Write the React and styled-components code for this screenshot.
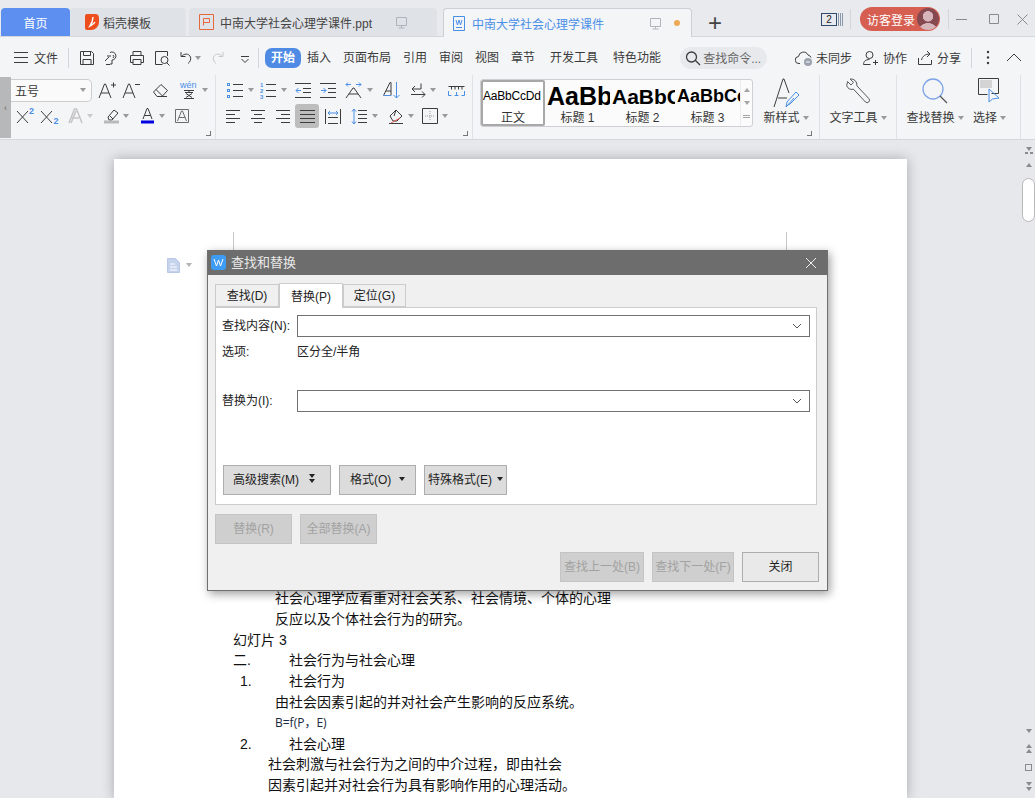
import React from 'react';
import styled, { createGlobalStyle } from 'styled-components';

const GlobalStyle = createGlobalStyle`
  html, body {
    margin: 0;
    padding: 0;
    overflow: hidden;
    background: #e7e8ec;
  }
  * {
    box-sizing: border-box;
  }
`;

const BLUE = '#4a8fe6';
const CJK = `"Liberation Sans", "Noto Sans CJK SC", sans-serif`;

const Root = styled.div`
  position: relative;
  width: 1035px;
  height: 798px;
  overflow: hidden;
  display: flex;
  flex-direction: column;
  font-family: ${CJK};
  font-size: 12px;
  color: #3a3a3a;
  background: #e7e8ec;
`;

/* ---- icons ---- */
const Svg = styled.svg`
  display: block;
  flex: none;
  fill: none;
  stroke: ${(p) => p.$stroke || '#3c3c3c'};
  stroke-width: 1;
`;

const paths = {
  menu: <path d="M0 2.5h14M0 7.5h14M0 12.5h14" />,
  save: <path d="M2.5 2.5h11l2 2v11h-13zM5.5 2.5v4h7v-4M5 15.5v-5h8v5" />,
  saveAs: <path d="M7 3.5a4 4 0 1 1 2 7.5v4h-2M4 7h4M2 12l4-4M10 6a2 2 0 0 1 0 3M3 15.5h4" />,
  print: <path d="M5 6V2.5h8V6M2.5 6.5h13v7h-2.5M2.5 6.5v7h2.5M5 10.5h8v5H5z" />,
  preview: <path d="M14.5 7V2.5h-12v13h7M8 11a3.5 3.5 0 1 0 7 0a3.5 3.5 0 1 0-7 0M13.5 13.5l3 3" />,
  undo: <path d="M4 3v4.5h4.5M4.5 7.5c2-3 7.5-3.5 9 .5c.8 2.5-.5 5-2.5 6.5" />,
  redo: <path d="M14 3v4.5H9.5M13.5 7.5c-2-3-7.5-3.5-9 .5c-.8 2.5.5 5 2.5 6.5" stroke="#c8c8c8" />,
  moreDown: <path d="M3 5.5h8M3.5 8l3.5 3.5L10.5 8" />,
  zoom: <path d="M1.5 7a5 5 0 1 0 10 0a5 5 0 1 0-10 0M10.5 10.5l4.5 4.5" strokeWidth="1.3" />,
  syncOff: (
    <>
      <path d="M5 14.5H4a3.5 3.5 0 0 1-.5-7a5 5 0 0 1 9.5-1.5a4 4 0 0 1 3 2.5" />
      <circle cx="13" cy="13" r="4" fill="#9aa3ad" stroke="none" />
      <path d="M11 13h4" stroke="#fff" />
    </>
  ),
  team: <path d="M4 6a3.5 3.5 0 1 0 7 0a3.5 3.5 0 1 0-7 0M1.5 15.5c0-3 2-5 6-5M8.5 15.5H1.5M11 13.5h5M13.5 11v5" />,
  share: <path d="M2.5 9v6.5h13V11M5.5 11c1-4 4-6 8-6M11 2l3 3-3 3" />,
  dots: (
    <g fill="#3c3c3c" stroke="none">
      <circle cx="2" cy="2" r="1.2" />
      <circle cx="2" cy="7.5" r="1.2" />
      <circle cx="2" cy="13" r="1.2" />
    </g>
  ),
  chevronUp: <path d="M1 9l7-7 7 7" />,
  monitor: <path d="M1.5 1.5h10v8h-10zM6.5 9.5v2M3.5 12h6" stroke="#aeb4bb" />,
  grow: <path d="M1 17L6.5 3h1L13 17M3 12h8M13 4h5M15.5 1.5v5" />,
  shrink: <path d="M1 17L6.5 3h1L13 17M3 12h8M13 3.5h5" />,
  eraser: <path d="M1.5 11L9 3.5 15.5 9.5 10 15.5H5zM4 8.5l6.5 6.5M5 15.5h10" />,
  phonetic: (
    <>
      <path d="M4 10.5h10M9 10.5v2M5 12.5h8M6 13.5l6 4M12 13.5l-6 4M4 18.5h10" />
      <text x="0" y="8" fontSize="9" fill={BLUE} stroke="none" fontFamily="Liberation Sans">wén</text>
    </>
  ),
  sup: <path d="M1 4l11 12M12 4L1 16" />,
  ghostA: <path d="M1 16L6.5 2h2L14 16M4 11h7M3 16l5-12" stroke="#c4c4c4" strokeWidth="1.5" />,
  marker: (
    <>
      <path d="M4 10l6-7 4 3-6 7H5zM6 9l3 3" />
      <path d="M0 15h15" stroke="#b9b9b9" strokeWidth="3" />
    </>
  ),
  colorA: (
    <>
      <path d="M3 12L7 1.5h1L12 12M4.5 8.5h6" />
      <path d="M1 15h13" stroke="#0000e0" strokeWidth="3" />
    </>
  ),
  boxA: <path d="M1.5 1.5h13v13h-13zM3.5 13L7.5 3h1l4 10M5 9.5h6" stroke="#6b6b6b" />,
  bullets: (
    <>
      <path d="M6 2.5h10M6 8.5h10M6 14.5h10" />
      <g stroke={BLUE}>
        <rect x="0.5" y="1.5" width="2" height="2" />
        <rect x="0.5" y="7.5" width="2" height="2" />
        <rect x="0.5" y="13.5" width="2" height="2" />
      </g>
    </>
  ),
  numbers: (
    <>
      <path d="M6 2.5h10M6 8.5h10M6 14.5h10" />
      <g fill={BLUE} stroke="none" fontSize="6" fontWeight="700" fontFamily="Liberation Sans">
        <text x="0" y="5">1</text>
        <text x="0" y="11">2</text>
        <text x="0" y="17">3</text>
      </g>
    </>
  ),
  outdent: (
    <>
      <path d="M0 1.5h16M8 6.5h8M8 10.5h8M0 15.5h16" />
      <path d="M6 8.5H1M3.5 6L1 8.5 3.5 11" stroke={BLUE} />
    </>
  ),
  indent: (
    <>
      <path d="M0 1.5h16M8 6.5h8M8 10.5h8M0 15.5h16" />
      <path d="M1 8.5h5M3.5 6L6 8.5 3.5 11" stroke={BLUE} />
    </>
  ),
  textDir: (
    <>
      <path d="M2 17L9 7h1l7 10M5 13h9" />
      <path d="M2 3.5h5M4 1.5l-2 2 2 2M12 3.5h5M15 1.5l2 2-2 2" stroke={BLUE} />
    </>
  ),
  sort: (
    <>
      <path d="M1.5 14.5L8 1.5h1v13M4 10h5" />
      <path d="M1.5 14.5h7.5" stroke={BLUE} />
      <path d="M14.5 1v16M11.5 14l3 3 3-3" stroke={BLUE} />
    </>
  ),
  tabMark: <path d="M11 1.5V7H2M5 4L2 7l3 3M1 12.5h14M12 9.5l3 3-3 3" />,
  ruler: (
    <>
      <path d="M0.5 3.5h16M3.5 3.5v3M7 3.5v3M10.5 3.5v3M14 3.5v3" />
      <path d="M0.5 8v4.5h3M16.5 8v4.5h-3M8.5 9v4M6.5 12.5h4" stroke={BLUE} />
    </>
  ),
  left: <path d="M0 2.5h14M0 6.5h9M0 10.5h14M0 14.5h9" />,
  center: <path d="M0 2.5h14M3 6.5h8M0 10.5h14M3 14.5h8" />,
  right: <path d="M0 2.5h14M5 6.5h9M0 10.5h14M5 14.5h9" />,
  justify: <path d="M0 2.5h15M0 6.5h15M0 10.5h15M0 14.5h15" />,
  distribute: (
    <>
      <path d="M.5 1v15M15.5 1v15M3 9.5h10M3 15.5h10" />
      <path d="M3 5h10M5 3L3 5l2 2M11 3l2 2-2 2" stroke={BLUE} />
    </>
  ),
  spacing: (
    <>
      <path d="M7 2.5h9M7 6.5h9M7 10.5h9M7 14.5h9" />
      <path d="M3 1v15M1 3.5L3 1l2 2.5M1 13.5L3 16l2-2.5" stroke={BLUE} />
    </>
  ),
  shading: (
    <>
      <path d="M2 8l6-6 6 6-5 5H5zM8 2l-2 6" />
      <path d="M1 15.5h14" />
      <path d="M3 15l9-5" stroke="#e0584c" />
    </>
  ),
  borders: (
    <>
      <path d="M.5 .5h15v15H.5z" />
      <path d="M8 3v10M3 8h10" stroke="#9a9a9a" strokeDasharray="1 1" />
    </>
  ),
  newStyle: (
    <>
      <path d="M1 29L10 1h1l5 14M5 20h9" />
      <path d="M15 27l-2 2 1-5 9-10 3 3-9 9z" stroke={BLUE} />
      <path d="M13 29l8-9" stroke={BLUE} />
    </>
  ),
  wrench: <path d="M3 3l4 4 3-3-4-4a7 7 0 0 1 8 8l14 15a2.5 2.5 0 0 1-4 4L10 12a7 7 0 0 1-8-4z" transform="translate(0 1) scale(.85)" />,
  findBig: (
    <>
      <path d="M1 11a10 10 0 1 0 20 0a10 10 0 1 0-20 0" stroke="#7da4e8" strokeWidth="1.3" />
      <path d="M18 18l7 7" stroke="#555" strokeWidth="1.3" />
    </>
  ),
  selectBig: (
    <>
      <path d="M.5 .5h20v15h-7M.5 .5v16h9" />
      <rect x="2" y="2" width="12" height="8" fill="#d4d4d4" stroke="none" />
      <path d="M11 11v13l3.5-3 6.5-1z" stroke={BLUE} />
    </>
  ),
  docPage: (
    <>
      <path d="M.5 .5h8l4 4v10h-12z" fill="#c5d3ec" stroke="#b9c8e6" />
      <path d="M3 6h5M3 9h7M3 12h7" stroke="#fff" />
    </>
  ),
  down: <path d="M1 1l4 4 4-4" />,
  close: <path d="M1 1l10 10M11 1L1 11" />,
};

const Icon = ({ name, w = 18, h = 18, stroke }) => (
  <Svg width={w} height={h} viewBox={`0 0 ${w} ${h}`} $stroke={stroke}>
    {paths[name]}
  </Svg>
);

const Caret = styled.span`
  flex: none;
  width: 0;
  height: 0;
  margin-left: ${(p) => p.$gap ?? 4}px;
  border: 3px solid transparent;
  border-top: 4px solid ${(p) => p.$color || '#9a9a9a'};
  border-bottom: 0;
`;

const CaretUp = styled.span`
  flex: none;
  width: 0;
  height: 0;
  border: 3px solid transparent;
  border-bottom: 4px solid ${(p) => p.$color || '#a5a5a5'};
  border-top: 0;
`;

/* ---- tab bar ---- */
const TabBar = styled.div`
  height: 37px;
  flex: none;
  display: flex;
  align-items: flex-end;
  padding-left: 1px;
  background: #e8eaee;
  border-bottom: 1px solid #d3d6db;
`;

const HomeTab = styled.div`
  width: 69px;
  height: 28px;
  display: flex;
  align-items: center;
  justify-content: center;
  background: #5c8ff0;
  color: #fff;
  border-radius: 4px 4px 0 0;
`;

const Tab = styled.div`
  display: flex;
  align-items: center;
  height: ${(p) => (p.$active ? 29 : 28)}px;
  width: ${(p) => p.$w}px;
  margin-left: ${(p) => p.$ml || 0}px;
  margin-bottom: ${(p) => (p.$active ? -1 : 0)}px;
  padding-left: ${(p) => p.$pl}px;
  gap: ${(p) => p.$gap || 6}px;
  border-radius: 4px 4px 0 0;
  background: ${(p) => (p.$active ? '#f4f5f7' : '#dfe2e7')};
  border: ${(p) => (p.$active ? '1px solid #ccd0d6' : '0')};
  border-bottom: 0;
  color: ${(p) => (p.$active ? BLUE : '#444')};
`;

const TabLabel = styled.span`
  flex: ${(p) => (p.$grow ? 1 : 'none')};
  white-space: nowrap;
`;

const TabMonitor = styled.span`
  margin-left: 17px;
`;

const Dot = styled.span`
  width: 6px;
  height: 6px;
  margin: 0 11px 0 5px;
  border-radius: 50%;
  background: #eea957;
`;

const NewTab = styled.div`
  width: 24px;
  margin: 0 0 1px 11px;
  font-size: 24px;
  line-height: 24px;
  text-align: center;
  color: #444;
`;

const WindowArea = styled.div`
  margin-left: auto;
  align-self: stretch;
  display: flex;
  align-items: center;
  padding: 2px 5px 0 0;
`;

const CountBadge = styled.div`
  width: 16px;
  height: 13px;
  border: 1px solid #2f4a6d;
  font-size: 10px;
  line-height: 11px;
  text-align: center;
  color: #222;
`;

const CountStripes = styled.div`
  width: 5px;
  height: 13px;
  margin-left: 1px;
  background: repeating-linear-gradient(90deg, #8a97a8 0 1px, transparent 1px 2px);
`;

const BarSep = styled.span`
  width: 1px;
  height: ${(p) => p.$h || 20}px;
  margin: ${(p) => p.$m || '0'};
  flex: none;
  background: #d3d5da;
`;

const LoginPill = styled.div`
  width: 80px;
  height: 24px;
  display: flex;
  align-items: center;
  justify-content: space-between;
  padding: 0 1px 0 7px;
  border-radius: 12px;
  background: #d65f52;
  color: #fff;
`;

const Avatar = styled.span`
  width: 22px;
  height: 22px;
  border-radius: 50%;
  background: radial-gradient(circle at 50% 38%, #d6b5bb 0 5px, transparent 5.5px),
    radial-gradient(circle at 50% 115%, #d6b5bb 0 10px, transparent 10.5px), #86494f;
`;

const WinBtn = styled.div`
  width: ${(p) => p.$w}px;
  display: flex;
  justify-content: center;
`;

/* ---- menu row ---- */
const MenuBar = styled.div`
  height: 38px;
  padding-top: 3px;
  flex: none;
  display: flex;
  align-items: center;
  background: #f4f5f7;
`;

const FileBtn = styled.div`
  width: 68px;
  padding-left: 14px;
  display: flex;
  align-items: center;
  gap: 6px;
`;

const Cell = styled.div`
  width: ${(p) => p.$w}px;
  height: ${(p) => p.$h || 26}px;
  flex: none;
  margin-left: ${(p) => p.$ml || 0}px;
  display: flex;
  align-items: center;
  justify-content: center;
  border-radius: 3px;
  background: ${(p) => (p.$on ? '#bdbdbd' : 'transparent')};
`;

const MenuItem = styled.div`
  padding: 0 6px;
  margin-left: ${(p) => p.$ml || 0}px;
  line-height: 20px;
  white-space: nowrap;
`;

const ActiveMenu = styled.div`
  width: 36px;
  height: 20px;
  margin-left: 6px;
  border-radius: 7px;
  background: #4f8be4;
  color: #fff;
  font-weight: 700;
  text-align: center;
  line-height: 20px;
`;

const SearchPill = styled.div`
  width: 87px;
  height: 22px;
  margin-left: 13px;
  padding-left: 5px;
  display: flex;
  align-items: center;
  gap: 2px;
  border-radius: 11px;
  background: #e7e9ec;
  color: #666;
  white-space: nowrap;
`;

const MenuRight = styled.div`
  margin-left: auto;
  display: flex;
  align-items: center;
  padding-right: 13px;
`;

const SyncBtn = styled.div`
  display: flex;
  align-items: center;
  gap: 3px;
  margin-right: ${(p) => p.$mr}px;
`;

const RightGap = styled.span`
  width: 16px;
`;

/* ---- ribbon ---- */
const Ribbon = styled.div`
  height: 65px;
  flex: none;
  display: flex;
  background: #f4f5f7;
  border-bottom: 1px solid #d6d7da;
`;

const Collapse = styled.div`
  width: 11px;
  height: 61px;
  margin-top: 2px;
  flex: none;
  display: flex;
  align-items: center;
  justify-content: center;
  background: #b7b8ba;
  color: #666;
  font-size: 9px;
`;

const Group = styled.div`
  position: relative;
  width: ${(p) => p.$w}px;
  flex: none;
  padding-top: 2px;
  border-right: 1px solid #e0e1e4;
`;

const ToolRow = styled.div`
  height: 26px;
  display: flex;
  align-items: center;
  padding-left: ${(p) => p.$pl || 0}px;
`;

const FontSelect = styled.div`
  width: 81px;
  height: 23px;
  flex: none;
  margin-right: 3px;
  padding: 0 5px 0 4px;
  display: flex;
  align-items: center;
  justify-content: space-between;
  background: #fafafa;
  border: 1px solid #cdcdcd;
  border-left: 0;
  border-radius: 0 5px 5px 0;
`;

const Digit = styled.span`
  font: 700 9px "Liberation Sans", sans-serif;
  color: ${BLUE};
  margin: ${(p) => (p.$low ? '10px 0 0 0' : '0 0 10px 0')};
`;

const Launcher = styled.span`
  position: absolute;
  right: ${(p) => p.$r || 4}px;
  bottom: 3px;
  width: 5px;
  height: 5px;
  border-right: 1px solid #777;
  border-bottom: 1px solid #777;
`;

const Gallery = styled.div`
  width: 273px;
  height: 48px;
  flex: none;
  margin: 4px 0 0 7px;
  display: flex;
  background: #fbfbfb;
  border: 1px solid #cfcfd3;
  border-radius: 3px;
`;

const StyleItem = styled.div`
  width: ${(p) => p.$w}px;
  flex: none;
  overflow: hidden;
  display: flex;
  flex-direction: column;
  align-items: center;
  background: ${(p) => (p.$on ? '#fff' : 'transparent')};
  box-shadow: ${(p) => (p.$on ? 'inset 0 0 0 2px #a8a8a8' : 'none')};
  border-radius: 2px;
`;

const StyleSample = styled.div`
  width: 100%;
  height: 31px;
  overflow: hidden;
  padding-left: 2px;
  font-family: "Liberation Sans", sans-serif;
  font-size: ${(p) => p.$size}px;
  font-weight: ${(p) => (p.$bold ? 700 : 400)};
  line-height: 33px;
  letter-spacing: ${(p) => p.$spacing || 0}px;
  white-space: nowrap;
  color: #000;
`;

const StyleName = styled.div`
  line-height: 15px;
  color: #333;
`;

const GalleryScroll = styled.div`
  flex: 1;
  display: flex;
  flex-direction: column;
  align-items: center;
  justify-content: space-around;
  padding: 3px 0;
  border-left: 1px solid #ececee;
`;

const ScrollLines = styled.span`
  width: 7px;
  height: 3px;
  border-top: 1px solid #a5a5a5;
  border-bottom: 1px solid #a5a5a5;
`;

const BigTool = styled.div`
  position: relative;
  width: ${(p) => p.$w}px;
  flex: none;
  padding: 3px ${(p) => p.$pr || 0}px 0 0;
  display: flex;
  flex-direction: column;
  align-items: center;
  border-right: ${(p) => (p.$sep ? '1px solid #e0e1e4' : '0')};
`;

const BigIconWrap = styled.div`
  height: 31px;
  display: flex;
  align-items: flex-start;
  justify-content: center;
`;

const BigLabel = styled.div`
  display: flex;
  align-items: center;
  line-height: 18px;
  white-space: nowrap;
`;

/* ---- document ---- */
const DocArea = styled.div`
  flex: 1;
  min-height: 0;
  display: flex;
  overflow: hidden;
`;

const DocPane = styled.div`
  flex: 1;
  padding: 19px 0 0 114px;
`;

const Page = styled.div`
  width: 793px;
  height: 640px;
  padding: 73px 120px 0 119px;
  background: #fff;
  box-shadow: 0 0 12px rgba(0, 0, 0, 0.28);
`;

const CropRow = styled.div`
  height: 18px;
  display: flex;
  justify-content: space-between;
`;

const CropMark = styled.span`
  width: 1px;
  background: #c8c8c8;
`;

const DocMarker = styled.div`
  display: flex;
  align-items: center;
  gap: 6px;
  height: 30px;
  margin-left: -66px;
`;

const Lines = styled.div`
  margin-top: 308px;
  color: #111;
  font-size: 14px;
  line-height: 20.8px;
`;

const Line = styled.div`
  display: flex;
  padding-left: ${(p) => p.$indent || 0}px;
  white-space: nowrap;
`;

const ListMark = styled.span`
  width: ${(p) => p.$w}px;
  flex: none;
`;

const Formula = styled.div`
  padding-left: 42px;
  font-size: 12px;
  font-family: "Open Sans", "Noto Sans CJK SC", sans-serif;
  color: #1a2a40;
`;

const ScrollRail = styled.div`
  width: 13px;
  flex: none;
  padding: 7px 0 7px;
  display: flex;
  flex-direction: column;
  align-items: center;
`;

const RailStack = styled.div`
  display: flex;
  flex-direction: column;
  align-items: center;
  gap: 1px;
  margin: ${(p) => p.$m || '0'};
`;

const RailDash = styled.span`
  width: 8px;
  height: 2px;
  background: repeating-linear-gradient(90deg, #8b8b8b 0 3px, transparent 3px 5px);
`;

const RailSquare = styled.span`
  width: 7px;
  height: 7px;
  border: 1px solid #8b8b8b;
`;

const Thumb = styled.div`
  width: 13px;
  height: 44px;
  margin-top: 11px;
  background: #fff;
  border: 1px solid #b9b9b9;
  border-radius: 7px;
`;

/* ---- dialog ---- */
const Dialog = styled.div`
  position: absolute;
  left: 207px;
  top: 250px;
  width: 621px;
  height: 341px;
  display: flex;
  flex-direction: column;
  background: #f0f0f0;
  border: 1px solid #6f6f6f;
  border-top: 0;
  box-shadow: 2px 3px 9px rgba(0, 0, 0, 0.38);
  color: #222;
`;

const TitleBar = styled.div`
  height: 25px;
  flex: none;
  display: flex;
  align-items: center;
  padding: 0 10px 0 3px;
  gap: 5px;
  background: #6d6d6d;
  color: #e8e8e8;
  font-size: 13px;
`;

const AppLogo = styled.span`
  width: 15px;
  height: 15px;
  flex: none;
  border-radius: 3px;
  background: #3f9cf5;
  color: #fff;
  display: flex;
  align-items: center;
  justify-content: center;
`;

const TitleText = styled.span`
  flex: 1;
  padding-bottom: 3px;
`;

const TabStrip = styled.div`
  display: flex;
  align-items: flex-end;
  height: 32px;
  padding-left: 7px;
  flex: none;
`;

const DlgTab = styled.div`
  width: ${(p) => p.$w}px;
  height: ${(p) => (p.$on ? 25 : 23)}px;
  margin-bottom: ${(p) => (p.$on ? -1 : 0)}px;
  padding-bottom: 2px;
  display: flex;
  align-items: center;
  justify-content: center;
  background: ${(p) => (p.$on ? '#fff' : '#f0f0f0')};
  border: 1px solid #ccc;
  border-bottom: ${(p) => (p.$on ? '0' : '1px solid #ccc')};
  position: relative;
  z-index: ${(p) => (p.$on ? 1 : 0)};
`;

const TabBody = styled.div`
  height: 198px;
  margin: 0 10px 0 7px;
  flex: none;
  padding: 7px 6px 0;
  background: #fff;
  border: 1px solid #ccc;
`;

const FieldRow = styled.div`
  display: flex;
  align-items: center;
  height: ${(p) => p.$h || 22}px;
  margin-bottom: ${(p) => p.$mb || 0}px;
`;

const FieldLabel = styled.label`
  width: 75px;
  flex: none;
  padding-bottom: 3px;
  white-space: nowrap;
`;

const FieldValue = styled.span`
  padding-bottom: 3px;
`;

const Combo = styled.div`
  flex: 1;
  height: 22px;
  padding-right: 7px;
  display: flex;
  align-items: center;
  justify-content: flex-end;
  border: 1px solid #707070;
  background: #fff;
`;

const ActionRow = styled.div`
  display: flex;
  gap: 8px;
  padding-left: 1px;
`;

const DlgButton = styled.button`
  width: ${(p) => p.$w}px;
  height: 30px;
  flex: none;
  padding: 0 ${(p) => p.$px || 0}px 3px;
  display: flex;
  align-items: center;
  justify-content: ${(p) => (p.$between ? 'space-between' : 'center')};
  font: inherit;
  white-space: nowrap;
  color: ${(p) => (p.disabled ? '#a2a2a2' : '#1e1e1e')};
  background: ${(p) => (p.disabled ? '#cfcfcf' : p.$plain ? '#e9e9e9' : '#dcdcdc')};
  border: 1px solid ${(p) => (p.disabled ? '#c4c4c4' : '#adadad')};
`;

const DoubleCaret = styled.span`
  display: flex;
  flex-direction: column;
  gap: 1px;
  margin-right: 6px;
`;

const ReplaceRow = styled.div`
  display: flex;
  gap: 8px;
  padding: 9px 0 0 7px;
`;

const FooterRow = styled.div`
  display: flex;
  justify-content: flex-end;
  gap: 8px;
  padding: 8px 8px 0 0;
`;

const App = () => (
  <Root>
    <GlobalStyle />

    <TabBar>
      <HomeTab>首页</HomeTab>
      <Tab $w={116} $pl={15} $gap={4}>
        <Svg width="14" height="16" viewBox="0 0 14 16" $stroke="none">
          <path d="M2 0h8a4 4 0 0 1 4 4v4a8 8 0 0 1-8 8H2a2 2 0 0 1-2-2V2a2 2 0 0 1 2-2z" fill="#ee4d1e" />
          <path d="M8 3C8 7 7 9 5 12c2-1 4-2 5-4" stroke="#fff" strokeWidth="1.4" fill="none" />
        </Svg>
        <TabLabel>稻壳模板</TabLabel>
      </Tab>
      <Tab $w={248} $ml={3} $pl={10}>
        <Svg width="15" height="16" viewBox="0 0 15 16" $stroke="#e5683d">
          <path d="M.5 .5h14v15H.5zM4.5 4.5h6v4h-6M4.5 4.5v7" />
        </Svg>
        <TabLabel>中南大学社会心理学课件.ppt</TabLabel>
        <TabMonitor>
          <Icon name="monitor" w={13} h={13} />
        </TabMonitor>
      </Tab>
      <Tab $active $w={249} $ml={6} $pl={9} $gap={7}>
        <Svg width="12" height="15" viewBox="0 0 12 15" $stroke={BLUE}>
          <path d="M.5 .5h11v14H.5zM3 4l1.5 5L6 4l1.5 5L9 4M3 11.5h6" />
        </Svg>
        <TabLabel $grow>中南大学社会心理学课件</TabLabel>
        <Icon name="monitor" w={13} h={13} />
        <Dot />
      </Tab>
      <NewTab>+</NewTab>
      <WindowArea>
        <CountBadge>2</CountBadge>
        <CountStripes />
        <BarSep $m="0 9px 0 7px" />
        <LoginPill>
          访客登录
          <Avatar />
        </LoginPill>
        <BarSep $m="0 0 0 8px" />
        <WinBtn $w={25}>
          <Svg width="11" height="11" viewBox="0 0 11 11" $stroke="#8a8a8a"><path d="M0 5.5h11" /></Svg>
        </WinBtn>
        <WinBtn $w={40}>
          <Svg width="11" height="11" viewBox="0 0 11 11" $stroke="#8a8a8a"><path d="M.5 .5h9v9h-9z" /></Svg>
        </WinBtn>
        <WinBtn $w={16}>
          <Svg width="11" height="11" viewBox="0 0 11 11" $stroke="#8a8a8a"><path d="M.5 .5l10 10M10.5 .5l-10 10" /></Svg>
        </WinBtn>
      </WindowArea>
    </TabBar>

    <MenuBar>
      <FileBtn>
        <Icon name="menu" w={14} h={15} />
        文件
      </FileBtn>
      <BarSep />
      <Cell $w={25} $ml={5}><Icon name="save" /></Cell>
      <Cell $w={25}><Icon name="saveAs" /></Cell>
      <Cell $w={25}><Icon name="print" /></Cell>
      <Cell $w={25}><Icon name="preview" /></Cell>
      <Cell $w={30}><Icon name="undo" /><Caret $gap={0} /></Cell>
      <Cell $w={28}><Icon name="redo" /></Cell>
      <Cell $w={26}><Icon name="moreDown" w={14} h={14} /></Cell>
      <BarSep />
      <ActiveMenu>开始</ActiveMenu>
      <MenuItem>插入</MenuItem>
      <MenuItem>页面布局</MenuItem>
      <MenuItem>引用</MenuItem>
      <MenuItem>审阅</MenuItem>
      <MenuItem>视图</MenuItem>
      <MenuItem>章节</MenuItem>
      <MenuItem $ml={3}>开发工具</MenuItem>
      <MenuItem $ml={3}>特色功能</MenuItem>
      <SearchPill>
        <Icon name="zoom" w={16} h={16} />
        查找命令...
      </SearchPill>
      <MenuRight>
        <SyncBtn $mr={10}><Icon name="syncOff" />未同步</SyncBtn>
        <SyncBtn $mr={9}><Icon name="team" />协作</SyncBtn>
        <SyncBtn $mr={10}><Icon name="share" />分享</SyncBtn>
        <BarSep $m="0 14px 0 0" />
        <Svg width="4" height="15" viewBox="0 0 4 15" $stroke="none">{paths.dots}</Svg>
        <RightGap />
        <Icon name="chevronUp" w={16} h={11} />
      </MenuRight>
    </MenuBar>

    <Ribbon>
      <Collapse>‹</Collapse>
      <Group $w={205}>
        <ToolRow>
          <FontSelect>五号<Caret /></FontSelect>
          <Cell $w={24}><Icon name="grow" w={19} /></Cell>
          <Cell $w={24}><Icon name="shrink" w={19} /></Cell>
          <Cell $w={34}><Icon name="eraser" w={17} /></Cell>
          <Cell $w={34}><Icon name="phonetic" w={18} h={20} /><Caret /></Cell>
        </ToolRow>
        <ToolRow $pl={2}>
          <Cell $w={24}><Icon name="sup" w={13} /><Digit>2</Digit></Cell>
          <Cell $w={25}><Icon name="sup" w={13} /><Digit $low>2</Digit></Cell>
          <Cell $w={36}><Icon name="ghostA" w={15} /><Caret $color="#c9c9c9" /></Cell>
          <Cell $w={37}><Icon name="marker" w={15} /><Caret /></Cell>
          <Cell $w={35}><Icon name="colorA" w={15} /><Caret /></Cell>
          <Cell $w={24}><Icon name="boxA" w={16} h={16} /></Cell>
        </ToolRow>
        <Launcher />
      </Group>
      <Group $w={257}>
        <ToolRow $pl={8}>
          <Cell $w={33}><Icon name="bullets" w={17} h={17} /><Caret /></Cell>
          <Cell $w={33}><Icon name="numbers" w={17} h={17} /><Caret /></Cell>
          <Cell $w={25}><Icon name="outdent" w={16} h={17} /></Cell>
          <Cell $w={25}><Icon name="indent" w={16} h={17} /></Cell>
          <Cell $w={36}><Icon name="textDir" w={19} /><Caret /></Cell>
          <Cell $w={30}><Icon name="sort" /></Cell>
          <Cell $w={34}><Icon name="tabMark" w={16} h={17} /><Caret /></Cell>
          <Cell $w={32}><Icon name="ruler" w={17} h={15} /></Cell>
        </ToolRow>
        <ToolRow $pl={4}>
          <Cell $w={25}><Icon name="left" w={14} h={17} /></Cell>
          <Cell $w={25}><Icon name="center" w={14} h={17} /></Cell>
          <Cell $w={25}><Icon name="right" w={14} h={17} /></Cell>
          <Cell $w={24} $h={24} $on><Icon name="justify" w={15} h={17} /></Cell>
          <Cell $w={27}><Icon name="distribute" w={16} h={17} /></Cell>
          <Cell $w={36}><Icon name="spacing" w={17} h={17} /><Caret /></Cell>
          <Cell $w={38}><Icon name="shading" w={16} h={17} /><Caret /></Cell>
          <Cell $w={30}><Icon name="borders" w={16} h={16} /><Caret /></Cell>
        </ToolRow>
        <Launcher />
      </Group>
      <Gallery>
        <StyleItem $w={64} $on>
          <StyleSample $size={12} $spacing={-0.2}>AaBbCcDd</StyleSample>
          <StyleName>正文</StyleName>
        </StyleItem>
        <StyleItem $w={65}>
          <StyleSample $size={25} $bold>AaBb</StyleSample>
          <StyleName>标题 1</StyleName>
        </StyleItem>
        <StyleItem $w={65}>
          <StyleSample $size={21} $bold>AaBbC</StyleSample>
          <StyleName>标题 2</StyleName>
        </StyleItem>
        <StyleItem $w={65}>
          <StyleSample $size={18} $bold>AaBbCc</StyleSample>
          <StyleName>标题 3</StyleName>
        </StyleItem>
        <GalleryScroll>
          <CaretUp />
          <Caret $gap={0} $color="#a5a5a5" />
          <ScrollLines />
        </GalleryScroll>
      </Gallery>
      <BigTool $w={67} $sep>
        <BigIconWrap><Icon name="newStyle" w={27} h={30} /></BigIconWrap>
        <BigLabel>新样式<Caret $gap={3} /></BigLabel>
        <Launcher $r={7} />
      </BigTool>
      <BigTool $w={77} $sep>
        <BigIconWrap><Icon name="wrench" w={26} h={28} /></BigIconWrap>
        <BigLabel>文字工具<Caret $gap={3} /></BigLabel>
      </BigTool>
      <BigTool $w={76}>
        <BigIconWrap><Icon name="findBig" w={26} h={26} /></BigIconWrap>
        <BigLabel>查找替换<Caret $gap={3} /></BigLabel>
      </BigTool>
      <BigTool $w={48} $pr={14} $sep>
        <BigIconWrap><Icon name="selectBig" w={23} h={26} /></BigIconWrap>
        <BigLabel>选择<Caret $gap={3} /></BigLabel>
      </BigTool>
    </Ribbon>

    <DocArea>
      <DocPane>
        <Page>
          <CropRow>
            <CropMark />
            <CropMark />
          </CropRow>
          <DocMarker>
            <Icon name="docPage" w={13} h={15} />
            <Caret $gap={0} $color="#b3b3b3" />
          </DocMarker>
          <Lines>
            <Line $indent={42}>社会心理学应看重对社会关系、社会情境、个体的心理</Line>
            <Line $indent={42}>反应以及个体社会行为的研究。</Line>
            <Line>幻灯片 3</Line>
            <Line><ListMark $w={56}>二.</ListMark>社会行为与社会心理</Line>
            <Line $indent={7}><ListMark $w={49}>1.</ListMark>社会行为</Line>
            <Line $indent={42}>由社会因素引起的并对社会产生影响的反应系统。</Line>
            <Formula>B=f(P，E)</Formula>
            <Line $indent={7}><ListMark $w={49}>2.</ListMark>社会心理</Line>
            <Line $indent={35}>社会刺激与社会行为之间的中介过程，即由社会</Line>
            <Line $indent={35}>因素引起并对社会行为具有影响作用的心理活动。</Line>
          </Lines>
        </Page>
      </DocPane>
      <ScrollRail>
        <RailStack>
          <Caret $gap={0} $color="#8b8b8b" />
          <RailDash />
        </RailStack>
        <RailStack $m="9px 0 0">
          <CaretUp $color="#8b8b8b" />
        </RailStack>
        <Thumb />
        <RailStack $m="auto 0 0">
          <Caret $gap={0} $color="#8b8b8b" />
        </RailStack>
        <RailStack $m="11px 0 0">
          <CaretUp $color="#8b8b8b" />
          <CaretUp $color="#8b8b8b" />
        </RailStack>
        <RailStack $m="11px 0 0">
          <RailSquare />
        </RailStack>
        <RailStack $m="11px 0 0">
          <Caret $gap={0} $color="#8b8b8b" />
          <Caret $gap={0} $color="#8b8b8b" />
        </RailStack>
      </ScrollRail>
    </DocArea>

    <Dialog>
      <TitleBar>
        <AppLogo>
          <Svg width="11" height="9" viewBox="0 0 11 9" $stroke="#fff"><path d="M1 1l2.5 7L5.5 2l2 6L10 1" /></Svg>
        </AppLogo>
        <TitleText>查找和替换</TitleText>
        <Svg width="12" height="12" viewBox="0 0 12 12" $stroke="#eee">{paths.close}</Svg>
      </TitleBar>
      <TabStrip>
        <DlgTab $w={64}>查找(D)</DlgTab>
        <DlgTab $w={64} $on>替换(P)</DlgTab>
        <DlgTab $w={63}>定位(G)</DlgTab>
      </TabStrip>
      <TabBody>
        <FieldRow $mb={4}>
          <FieldLabel>查找内容(N):</FieldLabel>
          <Combo><Svg width="10" height="6" viewBox="0 0 10 6" $stroke="#555">{paths.down}</Svg></Combo>
        </FieldRow>
        <FieldRow $mb={27}>
          <FieldLabel>选项:</FieldLabel>
          <FieldValue>区分全/半角</FieldValue>
        </FieldRow>
        <FieldRow $mb={53}>
          <FieldLabel>替换为(I):</FieldLabel>
          <Combo><Svg width="10" height="6" viewBox="0 0 10 6" $stroke="#555">{paths.down}</Svg></Combo>
        </FieldRow>
        <ActionRow>
          <DlgButton $w={108} $px={9} $between>
            高级搜索(M)
            <DoubleCaret>
              <Caret $gap={0} $color="#222" />
              <Caret $gap={0} $color="#222" />
            </DoubleCaret>
          </DlgButton>
          <DlgButton $w={77} $px={10} $between>格式(O)<Caret $color="#222" /></DlgButton>
          <DlgButton $w={83} $px={3} $between>特殊格式(E)<Caret $color="#222" /></DlgButton>
        </ActionRow>
      </TabBody>
      <ReplaceRow>
        <DlgButton $w={77} disabled>替换(R)</DlgButton>
        <DlgButton $w={77} disabled>全部替换(A)</DlgButton>
      </ReplaceRow>
      <FooterRow>
        <DlgButton $w={84} disabled>查找上一处(B)</DlgButton>
        <DlgButton $w={82} disabled>查找下一处(F)</DlgButton>
        <DlgButton $w={77} $plain>关闭</DlgButton>
      </FooterRow>
    </Dialog>
  </Root>
);

export default App;
